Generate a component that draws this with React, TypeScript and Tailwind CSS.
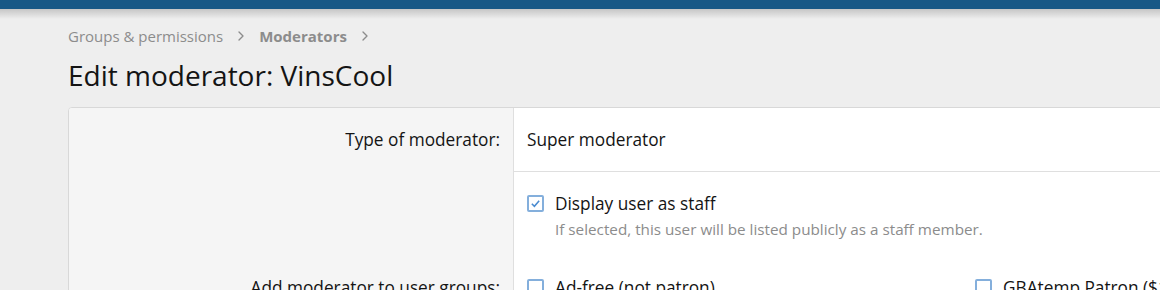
import { ChevronRight } from 'lucide-react';

function Box({ checked }: { checked?: boolean }) {
    return (
        <span className="mt-[3px] flex h-[17px] w-[17px] flex-shrink-0 items-center justify-center rounded-[2px] border-2 border-[#84afdc] bg-white">
            {checked && (
                <svg viewBox="0 0 12 12" className="h-[11px] w-[11px]">
                    <path d="M2 6.2 L4.8 9 L10 3" fill="none" stroke="#4a8bd0" strokeWidth="1.7" />
                </svg>
            )}
        </span>
    );
}

export default function App() {
    return (
        <div className="relative h-[290px] w-[1160px] overflow-hidden bg-[#eeeeee] font-['Open_Sans',sans-serif] text-[17.25px] leading-[24px] text-[#141414]">
            <div className="h-[9px] bg-[#185886]" />
            <div className="h-[10px] bg-gradient-to-b from-[#c6c6c6] to-[#eeeeee]" />

            <div className="pl-[68px]">
                <div className="mt-[7px] flex h-[20px] items-center gap-[10px] text-[15px] leading-[20px] text-[#8c8c8c]">
                    <span>Groups &amp; permissions</span>
                    <ChevronRight className="h-4 w-4" strokeWidth={2} />
                    <span className="font-bold">Moderators</span>
                    <ChevronRight className="h-4 w-4" strokeWidth={2} />
                </div>
                <h1 className="mt-[11px] h-[36px] text-[28px] leading-[36px] text-[#141414]">Edit moderator: VinsCool</h1>

                <div className="mt-[14px] flex w-[1200px] overflow-hidden rounded-[4px] border border-[#d8d8d8] bg-white">
                    <div className="w-[445px] flex-shrink-0 border-r border-[#dfdfdf] bg-[#f5f5f5]">
                        <div className="h-[64px] pr-[13px] pt-[20px] text-right">Type of moderator:</div>
                        <div className="h-[104px]" />
                        <div className="pr-[13px] text-right">Add moderator to user groups:</div>
                    </div>
                    <div className="flex-1">
                        <div className="h-[64px] border-b border-[#dfdfdf] pl-[13px] pt-[20px]">Super moderator</div>
                        <div className="h-[104px] pl-[13px] pt-[20px]">
                            <div className="flex gap-[11px]">
                                <Box checked />
                                <div>
                                    <div>Display user as staff</div>
                                    <div className="mt-[3px] text-[15.25px] leading-[21px] text-[#8c8c8c]">If selected, this user will be listed publicly as a staff member.</div>
                                </div>
                            </div>
                        </div>
                        <div className="flex pl-[13px]">
                            <div className="flex w-[448px] gap-[11px]">
                                <Box />
                                <span>Ad-free (not patron)</span>
                            </div>
                            <div className="flex gap-[11px]">
                                <Box />
                                <span>GBAtemp Patron ($1)</span>
                            </div>
                        </div>
                    </div>
                </div>
            </div>
        </div>
    );
}
